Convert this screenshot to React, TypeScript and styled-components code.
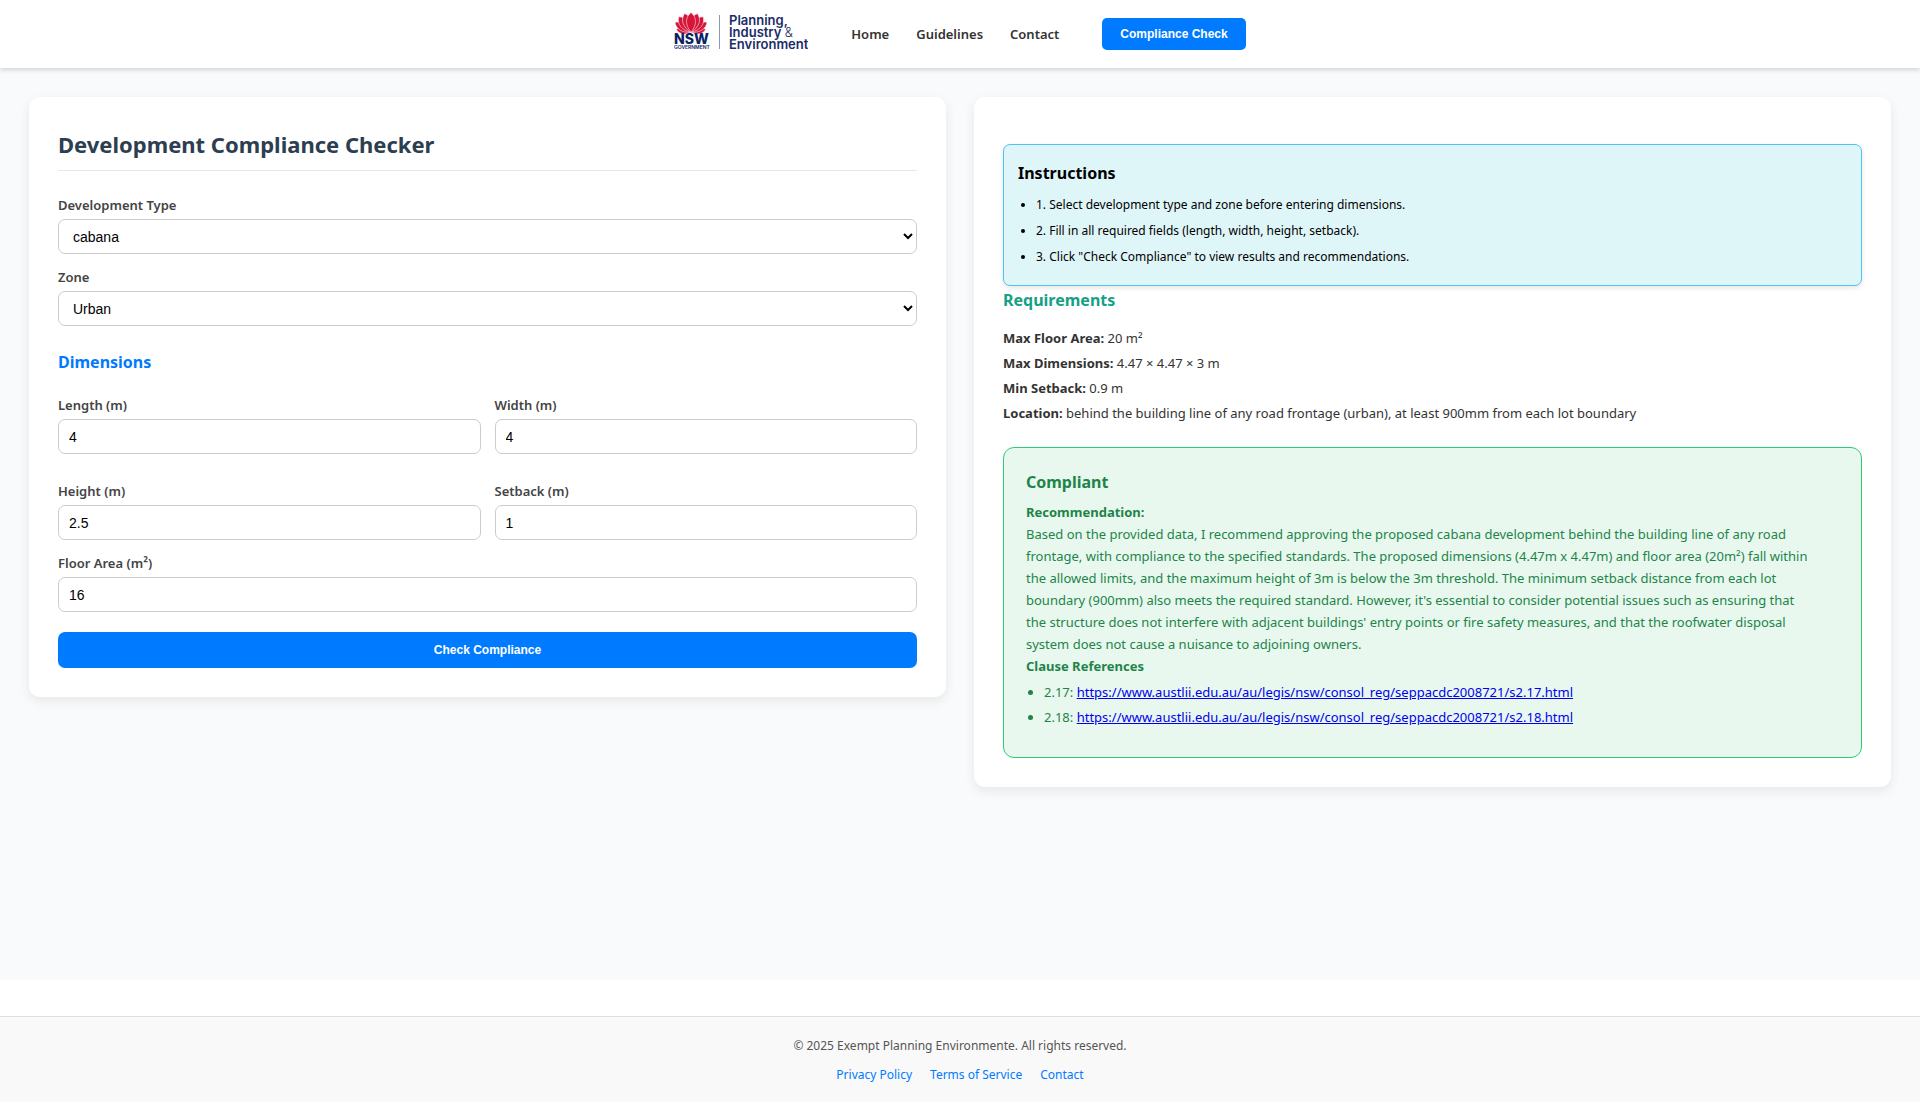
import React, { useState } from 'react';
import styled, { createGlobalStyle } from 'styled-components';

const GlobalStyle = createGlobalStyle`
  *, *::before, *::after { box-sizing: border-box; }
  body {
    margin: 0;
    background: #fff;
    color: #000;
    font-family: "Segoe UI", "Noto Sans", "Open Sans", sans-serif;
    font-size: 13px;
    line-height: 22px;
  }
  h1, h2, p, ul { margin: 0; }
`;

const Page = styled.div`
  display: flex;
  flex-direction: column;
  min-height: 100vh;
`;

/* ---------- Header ---------- */

const Header = styled.header`
  position: relative;
  display: flex;
  align-items: center;
  justify-content: center;
  gap: 43px;
  padding: 11px 24px 17px;
  background: #fff;
  box-shadow: 0 2px 5px rgba(0, 0, 0, 0.16);
`;

const HomeLink = styled.a`
  display: flex;
`;

const LogoName = styled.text`
  font-family: Inter, sans-serif;
  font-size: 13px;
  font-weight: 600;
  fill: #1a2d66;
`;

const Ampersand = styled.tspan`
  font-weight: 300;
`;

const LogoState = styled.text`
  font-family: Inter, sans-serif;
  font-size: 14px;
  font-weight: 800;
  fill: #0b2265;
`;

const LogoGovernment = styled.text`
  font-family: Inter, sans-serif;
  font-size: 5px;
  font-weight: 600;
  fill: #0b2265;
`;

const Nav = styled.nav`
  display: flex;
  gap: 27px;
  padding-top: 6px;
`;

const NavLink = styled.a`
  color: #333;
  font-weight: 600;
  text-decoration: none;
`;

const HeaderAction = styled.div`
  padding-top: 6px;
`;

const Button = styled.button<{ $wide?: boolean }>`
  display: block;
  width: ${(p) => (p.$wide ? '100%' : 'auto')};
  padding: ${(p) => (p.$wide ? '10px 18px' : '8px 18px')};
  border: none;
  border-radius: ${(p) => (p.$wide ? '7px' : '5px')};
  background: #007bff;
  color: #fff;
  font: bold 12px/16px Arial, "Liberation Sans", sans-serif;
  cursor: pointer;
`;

/* ---------- Main ---------- */

const Main = styled.main`
  flex: 1;
  display: grid;
  grid-template-columns: 1fr 1fr;
  align-items: start;
  gap: 28px;
  padding: 29px;
  background: #f9fafc;
`;

const Card = styled.section`
  padding: 29px;
  border-radius: 11px;
  background: #fff;
  box-shadow: 0 4px 12px rgba(0, 0, 0, 0.08);
`;

const Title = styled.h1`
  margin-bottom: 23px;
  padding-bottom: 8px;
  border-bottom: 1px solid #e6e8ea;
  color: #2c3e50;
  font-size: 22px;
  line-height: 36px;
`;

const Stack = styled.div`
  display: grid;
  gap: 12px;
`;

const FieldGrid = styled.div`
  display: grid;
  grid-template-columns: 1fr 1fr;
  gap: 26px 14px;
`;

const Field = styled.div`
  display: grid;
  gap: 3px;
`;

const Label = styled.label`
  color: #444;
  font-weight: 600;
`;

const Select = styled.select`
  width: 100%;
  height: 35px;
  padding: 0 10px;
  border: 1px solid #ccc;
  border-radius: 7px;
  background: #fff;
  color: #000;
  font: 14px Arial, "Liberation Sans", sans-serif;
`;

const Input = styled.input`
  width: 100%;
  height: 35px;
  padding: 0 10px;
  border: 1px solid #ccc;
  border-radius: 7px;
  background: #fff;
  color: #000;
  font: 14px Arial, "Liberation Sans", sans-serif;
`;

const GroupTitle = styled.h2`
  margin: 24px 0 20px;
  color: #007bff;
  font-size: 16px;
  line-height: 24px;
`;

const Submit = styled.div`
  margin-top: 20px;
`;

/* ---------- Result column ---------- */

const Instructions = styled.section`
  margin-top: 18px;
  padding: 16px 14px 15px;
  border: 1px solid #4fc3f7;
  border-radius: 7px;
  background: #dff6f9;
  box-shadow: 0 2px 5px rgba(0, 0, 0, 0.1);
`;

const InstructionsTitle = styled.h2`
  margin-bottom: 7px;
  font-size: 16px;
  line-height: 24px;
`;

const Bullets = styled.ul`
  padding-left: 18px;
`;

const Instruction = styled.li`
  font-size: 12px;
  line-height: 26px;
`;

const RequirementsTitle = styled.h2`
  margin-bottom: 12px;
  color: #16a085;
  font-size: 16px;
  line-height: 28px;
`;

const Requirement = styled.p`
  color: #333;
  line-height: 25px;
`;

const Result = styled.section`
  margin-top: 21px;
  padding: 20px 22px 27px;
  border: 1px solid #2ecc71;
  border-radius: 11px;
  background: #e8f8ef;
  color: #1e8449;
`;

const ResultTitle = styled.h2`
  margin-bottom: 5px;
  font-size: 16px;
  line-height: 28px;
`;

const Recommendation = styled.p`
  padding-right: 29px;
`;

const References = styled(Bullets)`
  margin-top: 3px;
`;

const Reference = styled.li`
  line-height: 25px;
`;

const ClauseLink = styled.a`
  color: #0000ee;
  text-decoration: underline;
`;

/* ---------- Footer ---------- */

const Footer = styled.footer`
  margin-top: 36px;
  padding: 18px 24px 16px;
  border-top: 1px solid #ddd;
  background: #f9f9f9;
  color: #555;
  font-size: 12px;
  text-align: center;
`;

const FooterLinks = styled.nav`
  display: flex;
  justify-content: center;
  gap: 18px;
  margin-top: 7px;
`;

const FooterLink = styled.a`
  color: #007bff;
  text-decoration: none;
`;

const petals = [
  { angle: 78, length: 15, spread: 4 },
  { angle: 58, length: 19, spread: 5 },
  { angle: 38, length: 20, spread: 6 },
  { angle: 19, length: 20, spread: 6 },
];

function petalPath(length: number, w: number) {
  return `M0 0C${-w} ${-length * 0.4} ${-w} ${-length * 0.75} 0 ${-length}C${w} ${-length * 0.75} ${w} ${-length * 0.4} 0 0Z`;
}

function Logo() {
  return (
    <svg width="134" height="40" viewBox="0 0 134 40" role="img" aria-label="NSW Government, Planning, Industry and Environment">
      <g transform="translate(17 21.5)" fill="#d7153a" stroke="#fff" strokeWidth="0.5">
        {petals.map((p) => (
          <React.Fragment key={p.angle}>
            <path d={petalPath(p.length, p.spread)} transform={`rotate(${-p.angle})`} />
            <path d={petalPath(p.length, p.spread)} transform={`rotate(${p.angle})`} />
          </React.Fragment>
        ))}
        <path d={petalPath(20, 6)} />
      </g>
      <LogoState x="0" y="33">NSW</LogoState>
      <LogoGovernment x="0" y="38">GOVERNMENT</LogoGovernment>
      <path d="M45.5 4V38" stroke="#8c98b8" />
      <LogoName x="55" y="14">Planning,</LogoName>
      <LogoName x="55" y="26">
        Industry <Ampersand>&amp;</Ampersand>
      </LogoName>
      <LogoName x="55" y="38">Environment</LogoName>
    </svg>
  );
}

const instructions = [
  '1. Select development type and zone before entering dimensions.',
  '2. Fill in all required fields (length, width, height, setback).',
  '3. Click "Check Compliance" to view results and recommendations.',
];

const requirements = [
  ['Max Floor Area:', '20 m²'],
  ['Max Dimensions:', '4.47 × 4.47 × 3 m'],
  ['Min Setback:', '0.9 m'],
  ['Location:', 'behind the building line of any road frontage (urban), at least 900mm from each lot boundary'],
];

const clauses = ['2.17', '2.18'];

const dimensions = [
  { id: 'length', label: 'Length (m)' },
  { id: 'width', label: 'Width (m)' },
  { id: 'height', label: 'Height (m)' },
  { id: 'setback', label: 'Setback (m)' },
] as const;

export default function App() {
  const [values, setValues] = useState({ length: '4', width: '4', height: '2.5', setback: '1' });
  const area = Number(values.length) * Number(values.width);

  return (
    <Page>
      <GlobalStyle />
      <Header>
        <HomeLink href="#home">
          <Logo />
        </HomeLink>
        <Nav>
          <NavLink href="#home">Home</NavLink>
          <NavLink href="#guidelines">Guidelines</NavLink>
          <NavLink href="#contact">Contact</NavLink>
        </Nav>
        <HeaderAction>
          <Button type="button">Compliance Check</Button>
        </HeaderAction>
      </Header>

      <Main>
        <Card as="form" onSubmit={(e: React.FormEvent) => e.preventDefault()}>
          <Title>Development Compliance Checker</Title>
          <Stack>
            <Field>
              <Label htmlFor="type">Development Type</Label>
              <Select id="type" defaultValue="cabana">
                <option>cabana</option>
                <option>deck</option>
                <option>carport</option>
              </Select>
            </Field>
            <Field>
              <Label htmlFor="zone">Zone</Label>
              <Select id="zone" defaultValue="Urban">
                <option>Urban</option>
                <option>Rural</option>
              </Select>
            </Field>
          </Stack>
          <GroupTitle>Dimensions</GroupTitle>
          <Stack>
            <FieldGrid>
              {dimensions.map((d) => (
                <Field key={d.id}>
                  <Label htmlFor={d.id}>{d.label}</Label>
                  <Input
                    id={d.id}
                    inputMode="decimal"
                    value={values[d.id]}
                    onChange={(e) => setValues({ ...values, [d.id]: e.target.value })}
                  />
                </Field>
              ))}
            </FieldGrid>
            <Field>
              <Label htmlFor="area">Floor Area (m²)</Label>
              <Input id="area" value={area} readOnly />
            </Field>
          </Stack>
          <Submit>
            <Button $wide type="submit">Check Compliance</Button>
          </Submit>
        </Card>

        <Card>
          <Instructions>
            <InstructionsTitle>Instructions</InstructionsTitle>
            <Bullets>
              {instructions.map((text) => (
                <Instruction key={text}>{text}</Instruction>
              ))}
            </Bullets>
          </Instructions>
          <RequirementsTitle>Requirements</RequirementsTitle>
          {requirements.map(([name, value]) => (
            <Requirement key={name}>
              <strong>{name}</strong> {value}
            </Requirement>
          ))}
          <Result>
            <ResultTitle>Compliant</ResultTitle>
            <strong>Recommendation:</strong>
            <Recommendation>
              Based on the provided data, I recommend approving the proposed cabana development behind the
              building line of any road frontage, with compliance to the specified standards. The proposed
              dimensions (4.47m x 4.47m) and floor area (20m²) fall within the allowed limits, and the maximum
              height of 3m is below the 3m threshold. The minimum setback distance from each lot boundary (900mm)
              also meets the required standard. However, it's essential to consider potential issues such as
              ensuring that the structure does not interfere with adjacent buildings' entry points or fire safety
              measures, and that the roofwater disposal system does not cause a nuisance to adjoining owners.
            </Recommendation>
            <strong>Clause References</strong>
            <References>
              {clauses.map((clause) => {
                const url = `https://www.austlii.edu.au/au/legis/nsw/consol_reg/seppacdc2008721/s${clause}.html`;
                return (
                  <Reference key={clause}>
                    {clause}: <ClauseLink href={url}>{url}</ClauseLink>
                  </Reference>
                );
              })}
            </References>
          </Result>
        </Card>
      </Main>

      <Footer>
        <p>© 2025 Exempt Planning Environmente. All rights reserved.</p>
        <FooterLinks>
          <FooterLink href="#privacy">Privacy Policy</FooterLink>
          <FooterLink href="#terms">Terms of Service</FooterLink>
          <FooterLink href="#contact">Contact</FooterLink>
        </FooterLinks>
      </Footer>
    </Page>
  );
}
